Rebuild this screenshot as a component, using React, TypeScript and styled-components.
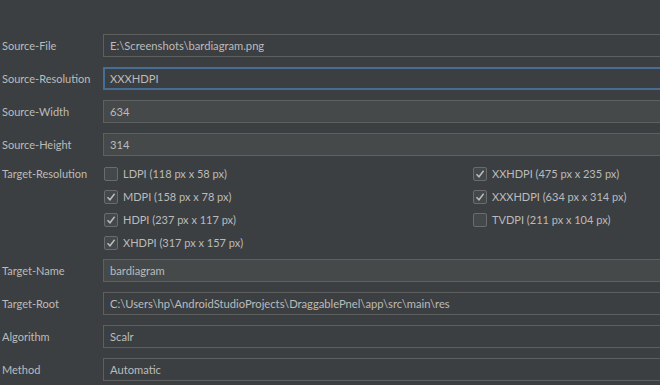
import styled, { createGlobalStyle } from "styled-components"

const GlobalStyle = createGlobalStyle`
  html, body {
    margin: 0;
    padding: 0;
    background: #3c3f41;
    overflow: hidden;
  }
  body {
    font-family: Lato, "Noto Sans", sans-serif;
    font-size: 11px;
    color: #bbbbbb;
  }
`

const Form = styled.div`
  display: grid;
  grid-template-columns: 103px 1fr;
  grid-template-rows: repeat(4, 23px) 83px repeat(4, 23px);
  row-gap: 10px;
  padding-top: 34px;
  width: 660px;
  height: 385px;
  box-sizing: border-box;
  overflow: hidden;
`

const Label = styled.div<{ $top?: boolean }>`
  line-height: 23px;
  padding-left: 2px;
  white-space: nowrap;
  margin-top: ${(p) => (p.$top ? "-4px" : "0")};
`

const Field = styled.div<{ $readonly?: boolean; $focused?: boolean }>`
  box-sizing: border-box;
  margin-right: -20px;
  border: ${(p) => (p.$focused ? "2px solid #466d94" : "1px solid #5e6060")};
  background: ${(p) => (p.$readonly ? "#45494a" : "#3c3f41")};
  padding-left: ${(p) => (p.$focused ? "5px" : "6px")};
  line-height: ${(p) => (p.$focused ? "19px" : "21px")};
  font-size: 11.2px;
  white-space: nowrap;
  overflow: hidden;
`

const Choices = styled.div`
  display: grid;
  grid-template-columns: 369px 1fr;
  grid-template-rows: repeat(4, 23px);
  grid-auto-flow: column;
  margin-top: -4px;
`

const Choice = styled.label`
  display: flex;
  align-items: center;
  gap: 5px;
  padding-left: 1px;
  white-space: nowrap;
`

const Box = styled.span`
  width: 14px;
  height: 14px;
  box-sizing: border-box;
  border: 1px solid #6b6b6b;
  border-radius: 2px;
  background: #43494a;
  display: flex;
  align-items: center;
  justify-content: center;
`

function Check({ checked, text }: { checked: boolean; text: string }) {
  return (
    <Choice>
      <Box>
        {checked && (
          <svg width="10" height="10" viewBox="0 0 10 10">
            <path d="M1.5 5.2 L4 7.8 L8.6 1.8" fill="none" stroke="#bbbbbb" strokeWidth="1.5" />
          </svg>
        )}
      </Box>
      {text}
    </Choice>
  )
}

const choices: [string, boolean][] = [
  ["LDPI (118 px x 58 px)", false],
  ["MDPI (158 px x 78 px)", true],
  ["HDPI (237 px x 117 px)", true],
  ["XHDPI (317 px x 157 px)", true],
  ["XXHDPI (475 px x 235 px)", true],
  ["XXXHDPI (634 px x 314 px)", true],
  ["TVDPI (211 px x 104 px)", false],
]

export default function App() {
  return (
    <>
      <GlobalStyle />
      <Form>
        <Label>Source-File</Label>
        <Field>E:\Screenshots\bardiagram.png</Field>
        <Label>Source-Resolution</Label>
        <Field $focused>XXXHDPI</Field>
        <Label>Source-Width</Label>
        <Field $readonly>634</Field>
        <Label>Source-Height</Label>
        <Field $readonly>314</Field>
        <Label $top>Target-Resolution</Label>
        <Choices>
          {choices.map(([text, checked]) => (
            <Check key={text} text={text} checked={checked} />
          ))}
        </Choices>
        <Label>Target-Name</Label>
        <Field $readonly>bardiagram</Field>
        <Label>Target-Root</Label>
        <Field>C:\Users\hp\AndroidStudioProjects\DraggablePnel\app\src\main\res</Field>
        <Label>Algorithm</Label>
        <Field>Scalr</Field>
        <Label>Method</Label>
        <Field>Automatic</Field>
      </Form>
    </>
  )
}
